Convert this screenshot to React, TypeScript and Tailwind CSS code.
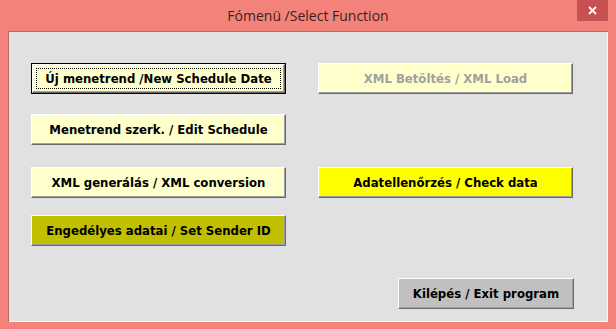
const font = "font-['DejaVu_Sans_Condensed','DejaVu_Sans',sans-serif]";

function Btn({
  label,
  bg,
  text = "text-black",
  focused = false,
  className = "",
  width = "w-[255px]",
}: {
  label: string;
  bg: string;
  text?: string;
  focused?: boolean;
  className?: string;
  width?: string;
}) {
  const face = (
    <div
      className={`flex h-full w-full items-center justify-center border-t border-l border-r border-b border-t-white border-l-white border-r-[#696969] border-b-[#696969] shadow-[inset_-1px_-1px_0_#a0a0a0] ${bg}`}
    >
      {focused ? (
        <div className="flex h-[calc(100%-6px)] w-[calc(100%-6px)] items-center justify-center border border-dotted border-black">
          <span className={`${font} text-[13px] font-bold ${text}`}>{label}</span>
        </div>
      ) : (
        <span className={`${font} text-[13px] font-bold ${text}`}>{label}</span>
      )}
    </div>
  );
  return (
    <div className={`h-[31px] ${width} ${focused ? "border border-black" : ""} ${className}`}>
      {face}
    </div>
  );
}

export default function App() {
  return (
    <div className="flex h-[329px] w-[616px] flex-col bg-[#f3837a]">
      {/* Title bar */}
      <div className="relative flex h-[31px] items-center justify-center">
        <span className="font-['Open_Sans','Noto_Sans',sans-serif] text-[14px] text-[#3d1d1b]">
          Fómenü /Select Function
        </span>
        <div className="absolute right-[8px] top-0 flex h-[21px] w-[31px] items-center justify-center bg-[#c75050]">
          <svg width="9" height="9" viewBox="0 0 9 9">
            <path d="M1 1 L8 8 M8 1 L1 8" stroke="white" strokeWidth="1.8" />
          </svg>
        </div>
      </div>

      {/* Client area */}
      <div className="mx-[8px] h-[291px] border-t border-l border-[#b86a63] bg-[#e1e1e1] shadow-[inset_-1px_-1px_0_#f7f7f7]">
        <div className="grid grid-cols-[255px_255px] gap-x-[32px] pl-[22px] pt-[31px]">
          <Btn label="Új menetrend /New Schedule Date" bg="bg-[#ffffcc]" focused />
          <Btn label="XML Betöltés / XML Load" bg="bg-[#ffffcc]" text="text-[#a0a0a0]" />
          <Btn label="Menetrend szerk. / Edit Schedule" bg="bg-[#ffffcc]" className="mt-[20px]" />
          <div />
          <Btn label="XML generálás / XML conversion" bg="bg-[#ffffcc]" className="mt-[22px]" />
          <Btn label="Adatellenőrzés / Check data" bg="bg-[#ffff00]" className="mt-[22px]" />
          <Btn label="Engedélyes adatai / Set Sender ID" bg="bg-[#c0c000]" className="mt-[17px]" />
        </div>
        <div className="flex justify-end pr-[34px] pt-[32px]">
          <Btn label="Kilépés / Exit program" bg="bg-[#c0c0c0]" width="w-[176px]" />
        </div>
      </div>
    </div>
  );
}
